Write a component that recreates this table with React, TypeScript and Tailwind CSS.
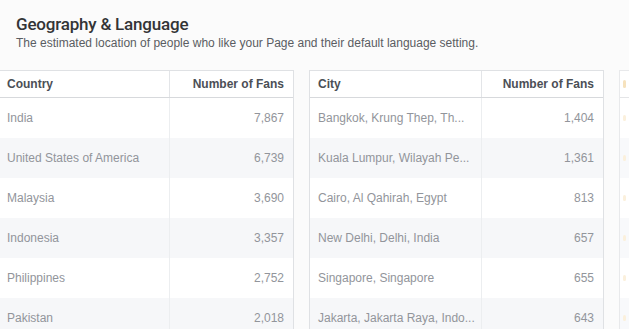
import React from "react";

const countries: [string, string][] = [
  ["India", "7,867"],
  ["United States of America", "6,739"],
  ["Malaysia", "3,690"],
  ["Indonesia", "3,357"],
  ["Philippines", "2,752"],
  ["Pakistan", "2,018"],
];

const cities: [string, string][] = [
  ["Bangkok, Krung Thep, Th...", "1,404"],
  ["Kuala Lumpur, Wilayah Pe...", "1,361"],
  ["Cairo, Al Qahirah, Egypt", "813"],
  ["New Delhi, Delhi, India", "657"],
  ["Singapore, Singapore", "655"],
  ["Jakarta, Jakarta Raya, Indo...", "643"],
];

function Table({
  head,
  rows,
  className,
  leftW,
}: {
  head: string;
  rows: [string, string][];
  className: string;
  leftW: string;
}) {
  return (
    <div className={`shrink-0 border border-[#dfe1e4] bg-white ${className}`}>
      <div className="flex h-[27px] border-b border-[#d7d9dc] text-[12px] font-bold text-[#4b4f56]">
        <div className={`${leftW} flex items-center border-r border-[#e3e5e8] pl-2`}>{head}</div>
        <div className="flex flex-1 items-center justify-end pr-[9px]">Number of Fans</div>
      </div>
      {rows.map(([a, b], i) => (
        <div
          key={i}
          className={`flex h-[40px] text-[12px] text-[#92959b] ${i % 2 === 1 ? "bg-[#f6f7f9]" : "bg-white"}`}
        >
          <div className={`${leftW} flex items-center border-r border-[#eceef0] pl-2 whitespace-nowrap overflow-hidden`}>{a}</div>
          <div className="flex flex-1 items-center justify-end pr-[9px]">{b}</div>
        </div>
      ))}
    </div>
  );
}

function FadedTable() {
  return (
    <div className="w-[200px] shrink-0 border border-[#e8e9eb] bg-white">
      <div className="flex h-[27px] items-center border-b border-[#e4e5e7] pl-[3px]">
        <span className="h-[8px] w-[3px] rounded-sm bg-[#f6e2bd]" />
      </div>
      {[0, 1, 2, 3, 4, 5].map((i) => (
        <div
          key={i}
          className={`flex h-[40px] items-center pl-[3px] ${i % 2 === 1 ? "bg-[#f8f9fb]" : "bg-white"}`}
        >
          <span className="h-[6px] w-[3px] rounded-sm bg-[#fbf0dc]" />
        </div>
      ))}
    </div>
  );
}

export default function App() {
  return (
    <div
      className="h-[329px] w-[629px] overflow-hidden bg-[#fbfbfb]"
      style={{ fontFamily: '"Liberation Sans", Arial, sans-serif' }}
    >
      <div className="pl-4 pt-[13px]">
        <h1
          className="text-[17px] leading-[22px] font-medium tracking-[-0.2px] text-[#333436]"
          style={{ fontFamily: 'Roboto, "Liberation Sans", sans-serif' }}
        >
          Geography &amp; Language
        </h1>
        <p className="mt-[1px] text-[12px] leading-[15px] text-[#5a5d62]">
          The estimated location of people who like your Page and their default language setting.
        </p>
      </div>
      <div className="mt-[19px] flex gap-[15px] pl-0">
        <Table head="Country" rows={countries} className="-ml-px w-[295px] border-l-0" leftW="w-[171px]" />
        <Table head="City" rows={cities} className="w-[295px]" leftW="w-[172px]" />
        <FadedTable />
      </div>
    </div>
  );
}
